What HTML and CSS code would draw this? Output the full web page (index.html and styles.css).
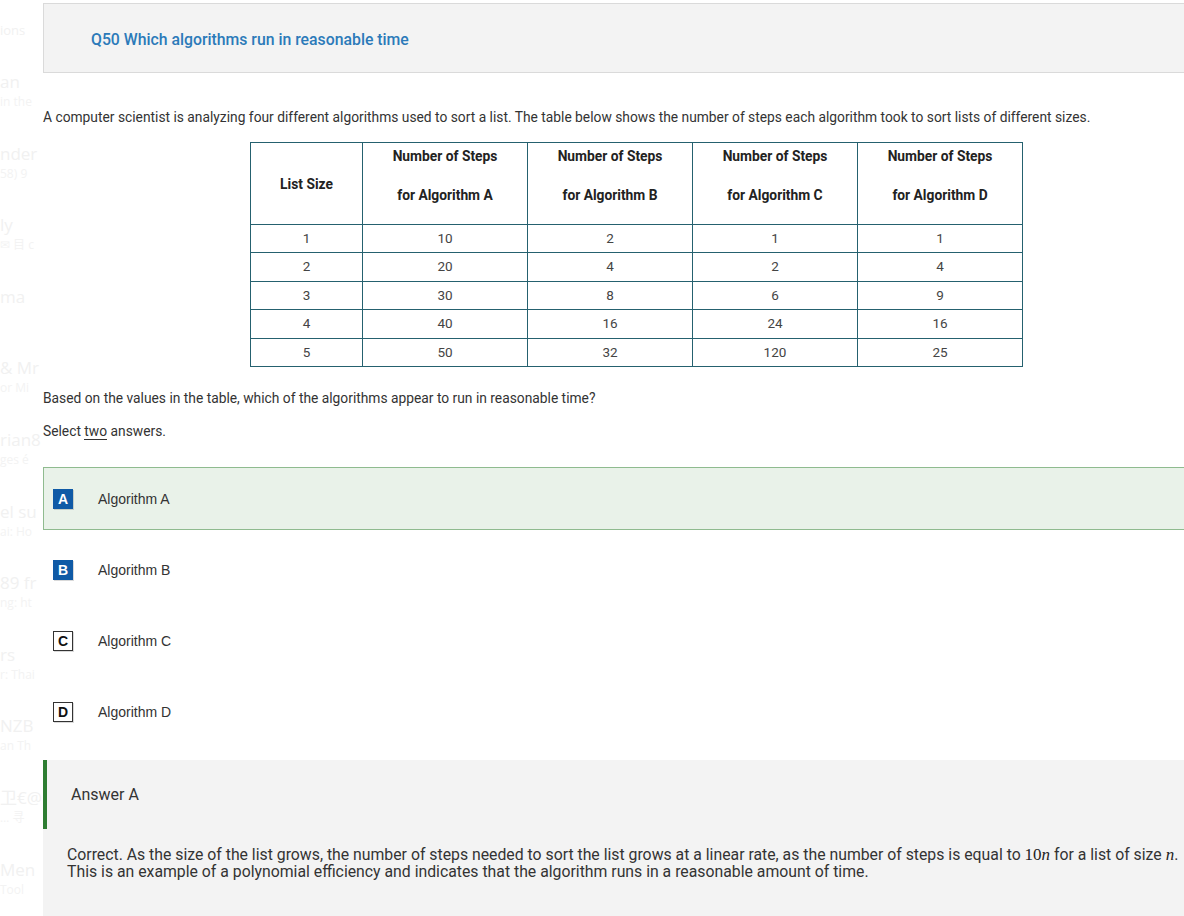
FILE: index.html
```html
<!DOCTYPE html>
<html lang="en">
<head>
<meta charset="utf-8">
<title>Q50 Which algorithms run in reasonable time</title>
<link rel="stylesheet" href="styles.css">
</head>
<body>
<div class="page">
  <aside class="ghost">
    <div class="ghost-top"><span>ions</span></div>
    <div class="g"><span class="gl">an</span><span class="gs">in the</span></div>
    <div class="g"><span class="gl">nder</span><span class="gs">58) 9</span></div>
    <div class="g"><span class="gl">ly</span><span class="gs">✉ 目 c</span></div>
    <div class="g"><span class="gl">ma</span><span class="gs">&nbsp;</span></div>
    <div class="g"><span class="gl">&amp; Mr</span><span class="gs">or Mi</span></div>
    <div class="g"><span class="gl">rian8</span><span class="gs">ges é</span></div>
    <div class="g"><span class="gl">el su</span><span class="gs">ai: Ho</span></div>
    <div class="g"><span class="gl">89 fr</span><span class="gs">ng: ht</span></div>
    <div class="g"><span class="gl">rs</span><span class="gs">r: Thai</span></div>
    <div class="g"><span class="gl">NZB</span><span class="gs">an Th</span></div>
    <div class="g"><span class="gl">卫€@</span><span class="gs">… 寻</span></div>
    <div class="g"><span class="gl">Men</span><span class="gs">Tool</span></div>
  </aside>

  <main class="main">
    <header class="qhead">
      <h1 class="qtitle">Q50 Which algorithms run in reasonable time</h1>
    </header>

    <p class="intro">A computer scientist is analyzing four different algorithms used to sort a list. The table below shows the number of steps each algorithm took to sort lists of different sizes.</p>

    <table class="steps">
      <thead>
        <tr>
          <th class="c-size">List Size</th>
          <th><span class="l1">Number of Steps</span><span class="l2">for Algorithm A</span></th>
          <th><span class="l1">Number of Steps</span><span class="l2">for Algorithm B</span></th>
          <th><span class="l1">Number of Steps</span><span class="l2">for Algorithm C</span></th>
          <th><span class="l1">Number of Steps</span><span class="l2">for Algorithm D</span></th>
        </tr>
      </thead>
      <tbody>
        <tr><td>1</td><td>10</td><td>2</td><td>1</td><td>1</td></tr>
        <tr><td>2</td><td>20</td><td>4</td><td>2</td><td>4</td></tr>
        <tr><td>3</td><td>30</td><td>8</td><td>6</td><td>9</td></tr>
        <tr><td>4</td><td>40</td><td>16</td><td>24</td><td>16</td></tr>
        <tr><td>5</td><td>50</td><td>32</td><td>120</td><td>25</td></tr>
      </tbody>
    </table>

    <p class="prompt">Based on the values in the table, which of the algorithms appear to run in reasonable time?</p>
    <p class="select">Select <span class="u">two</span> answers.</p>

    <ul class="options">
      <li class="opt opt-correct"><span class="badge badge-on">A</span><span class="opt-text">Algorithm A</span></li>
      <li class="opt"><span class="badge badge-on">B</span><span class="opt-text">Algorithm B</span></li>
      <li class="opt"><span class="badge">C</span><span class="opt-text">Algorithm C</span></li>
      <li class="opt"><span class="badge">D</span><span class="opt-text">Algorithm D</span></li>
    </ul>

    <section class="answer">
      <div class="answer-head">Answer A</div>
      <p class="answer-body">Correct. As the size of the list grows, the number of steps needed to sort the list grows at a linear rate, as the number of steps is equal to <span class="math">10<i>n</i></span> for a list of size <span class="math"><i>n</i></span>.<br>This is an example of a polynomial efficiency and indicates that the algorithm runs in a reasonable amount of time.</p>
    </section>
  </main>
</div>
</body>
</html>
```
FILE: styles.css
```css
html, body {
  margin: 0;
  padding: 0;
  background: #ffffff;
  overflow: hidden;
}

body {
  font-family: Roboto, "Liberation Sans", Arial, sans-serif;
  color: #333333;
  width: 1184px;
  height: 916px;
}

.page {
  display: grid;
  grid-template-columns: 43px 1170px;
  align-items: start;
}

/* faint background remnants on the left */
.ghost {
  overflow: hidden;
  display: flex;
  flex-direction: column;
  color: #f1f1f1;
  font-family: "Open Sans", "Noto Sans", "Noto Sans CJK SC", sans-serif;
  white-space: nowrap;
}

.ghost-top {
  height: 72px;
  display: flex;
  align-items: center;
  font-size: 13px;
  padding-bottom: 12px;
  box-sizing: border-box;
}

.g {
  height: 71.6px;
  display: flex;
  flex-direction: column;
}

.gl {
  font-size: 17px;
  line-height: 20px;
}

.gs {
  font-size: 12px;
  line-height: 20px;
  color: #f3f3f3;
}

/* main column */
.main {
  display: flex;
  flex-direction: column;
  align-items: flex-start;
}

.qhead {
  margin-top: 3px;
  align-self: stretch;
  height: 68px;
  background: #f3f3f3;
  border: 1px solid #dadada;
  display: flex;
  align-items: center;
  padding-left: 47px;
}

.qtitle {
  margin: 0;
  font-size: 15.8px;
  font-weight: 500;
  color: #2b7ab9;
  padding-top: 2px;
}

.intro {
  margin: 35px 0 0;
  font-size: 13.8px;
  line-height: 18px;
  color: #333333;
}

.steps {
  margin: 16px 0 0 207px;
  border-collapse: collapse;
  table-layout: fixed;
  width: 772px;
  font-size: 13.5px;
  color: #444444;
}

.steps th,
.steps td {
  border: 1px solid #25616f;
  text-align: center;
}

.steps th {
  width: 164px;
  padding: 4px 0 20px;
  font-weight: 700;
  font-size: 13.8px;
  color: #222222;
  line-height: 18px;
  vertical-align: middle;
}

.steps th.c-size {
  width: 111px;
  padding: 0;
}

.steps .l1,
.steps .l2 {
  display: block;
}

.steps .l1 {
  margin-bottom: 21px;
}

.steps td {
  padding: 5px 0;
  line-height: 17.4px;
}

.prompt {
  margin: 22px 0 0;
  font-size: 13.8px;
  line-height: 18px;
}

.select {
  margin: 15px 0 0;
  font-size: 13.8px;
  line-height: 18px;
}

.u {
  border-bottom: 1px solid #333333;
}

.options {
  list-style: none;
  margin: 27px 0 0;
  padding: 0;
  align-self: stretch;
  display: flex;
  flex-direction: column;
  gap: 8px;
}

.opt {
  height: 61px;
  border: 1px solid transparent;
  display: flex;
  align-items: center;
  padding-left: 9px;
  font-family: "Liberation Sans", Arial, sans-serif;
  font-size: 14px;
  color: #333333;
}

.opt-correct {
  background: #e9f2e9;
  border-color: #8fbb8f;
}

.badge {
  width: 18px;
  height: 18px;
  border: 1px solid #333333;
  background: #ffffff;
  color: #111111;
  font-weight: 700;
  font-size: 14px;
  line-height: 18px;
  text-align: center;
  margin-right: 25px;
  box-shadow: 1px 1px 0 rgba(0, 0, 0, 0.15);
}

.badge-on {
  background: #0f5aa6;
  border-color: #0f5aa6;
  color: #ffffff;
}

.answer {
  margin-top: 17px;
  align-self: stretch;
  height: 156px;
  background: #f3f3f3;
  display: flex;
  flex-direction: column;
}

.answer-head {
  height: 69px;
  border-left: 4px solid #2e7d32;
  padding-left: 24px;
  display: flex;
  align-items: center;
  font-size: 16px;
  color: #333333;
}

.answer-body {
  margin: 17px 0 0;
  padding-left: 24px;
  font-size: 15.8px;
  line-height: 17px;
  color: #333333;
}

.math {
  font-family: "Liberation Serif", "DejaVu Serif", serif;
  font-size: 17px;
  color: #222222;
}
```
